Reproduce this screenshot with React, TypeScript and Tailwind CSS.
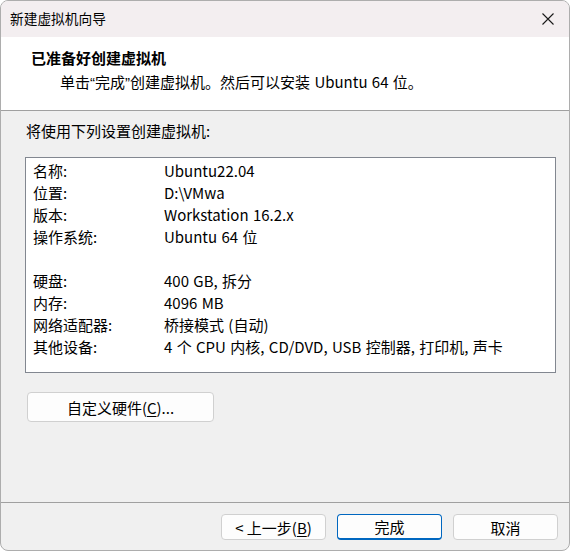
import React from "react";

const rows: [string, string][] = [
  ["名称:", "Ubuntu22.04"],
  ["位置:", "D:\\VMwa"],
  ["版本:", "Workstation 16.2.x"],
  ["操作系统:", "Ubuntu 64 位"],
  ["", ""],
  ["硬盘:", "400 GB, 拆分"],
  ["内存:", "4096 MB"],
  ["网络适配器:", "桥接模式 (自动)"],
  ["其他设备:", "4 个 CPU 内核, CD/DVD, USB 控制器, 打印机, 声卡"],
];

function CloseIcon() {
  return (
    <svg width="12" height="12" viewBox="0 0 12 12" className="block">
      <path d="M0.5 0.5 L11.5 11.5 M11.5 0.5 L0.5 11.5" stroke="#1a1a1a" strokeWidth="1.1" fill="none" />
    </svg>
  );
}

function Q({ c }: { c: string }) {
  return <span className="font-['Liberation_Sans',sans-serif]">{c}</span>;
}

export default function App() {
  return (
    <div className="w-[570px] h-[551px] bg-white font-['Noto_Sans_CJK_SC',sans-serif] text-black [word-spacing:1px]">
      <div className="w-[570px] h-[551px] border border-[#adadad] rounded-[8px] overflow-hidden flex flex-col bg-[#f0f0f0]">
        {/* title bar */}
        <div className="h-[36px] shrink-0 bg-[#f3eef0] flex items-center justify-between pl-[9px] pr-[15px]">
          <span className="text-[13.7px] leading-none">新建虚拟机向导</span>
          <CloseIcon />
        </div>

        {/* header */}
        <div className="h-[74px] shrink-0 bg-white border-b border-[#a0a0a0] pt-[9px] pl-[30px]">
          <div className="text-[15px] leading-[24px] font-bold">已准备好创建虚拟机</div>
          <div className="text-[15px] leading-[24px] pl-[29px]">
            单击<Q c="“" />完成<Q c="”" />创建虚拟机。然后可以安装 Ubuntu 64 位。
          </div>
        </div>

        {/* body */}
        <div className="h-[392px] shrink-0 border-b border-[#a0a0a0] pt-[9px] px-[24px]">
          <div className="ml-[1px] text-[15px] leading-[22px]">将使用下列设置创建虚拟机:</div>
          <div className="mt-[15px] w-[531px] h-[216px] bg-white border border-[#828790] pt-[2px] pl-[7px]">
            {rows.map(([k, v], i) => (
              <div key={i} className="flex h-[22px] items-center text-[15px] leading-[22px]">
                <span className="w-[131px] shrink-0">{k}</span>
                <span className="whitespace-nowrap">{v}</span>
              </div>
            ))}
          </div>
          <button className="mt-[19px] ml-[2px] w-[187px] h-[30px] rounded-[4px] border border-[#d0d0d0] bg-[#fdfdfd] text-[15px] leading-none flex items-center justify-center">
            自定义硬件(<span className="underline underline-offset-2">C</span>)...
          </button>
        </div>

        {/* footer */}
        <div className="flex-1 pt-[11px] pr-[11px] flex justify-end items-start gap-[11px]">
          <button className="w-[105px] h-[26px] rounded-[4px] border border-[#d0d0d0] bg-[#fdfdfd] text-[15px] leading-none flex items-center justify-center">
            &lt; 上一步(<span className="underline underline-offset-2">B</span>)
          </button>
          <button className="w-[105px] h-[26px] rounded-[4px] border border-[#0067c0] border-b-2 bg-[#fdfdfd] text-[15px] leading-none flex items-center justify-center">
            完成
          </button>
          <button className="w-[105px] h-[26px] rounded-[4px] border border-[#d0d0d0] bg-[#fdfdfd] text-[15px] leading-none flex items-center justify-center">
            取消
          </button>
        </div>
      </div>
    </div>
  );
}
